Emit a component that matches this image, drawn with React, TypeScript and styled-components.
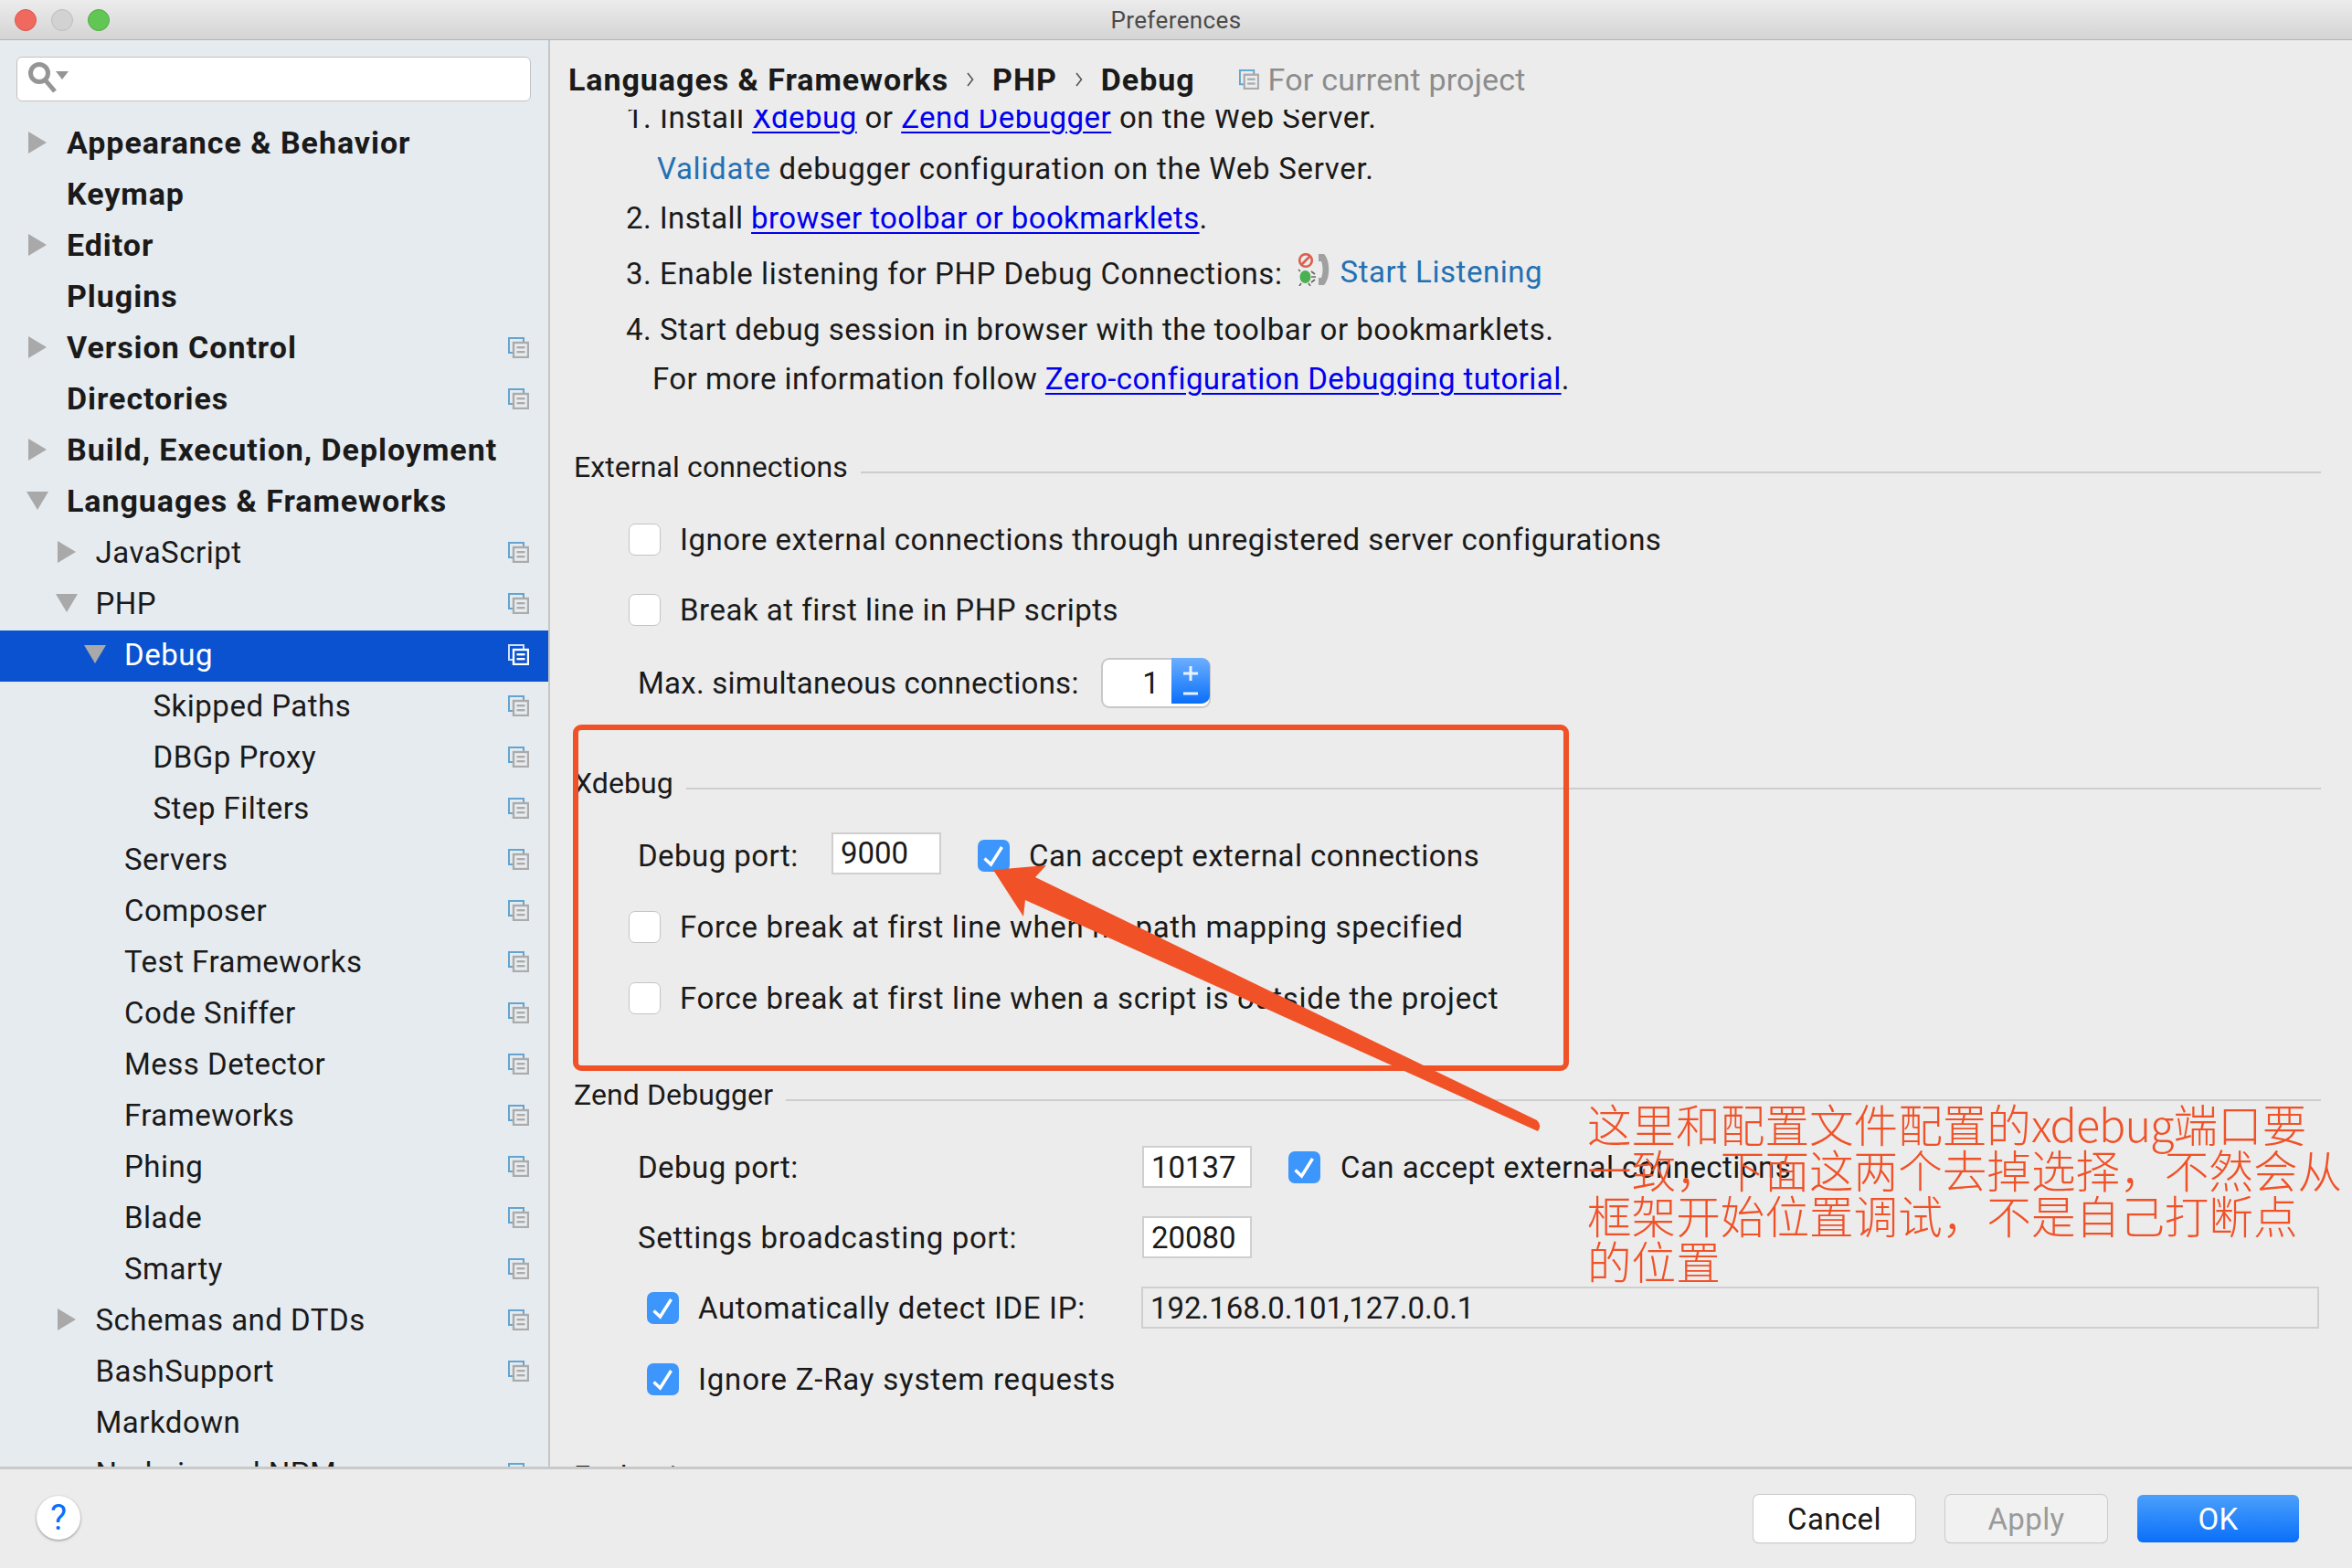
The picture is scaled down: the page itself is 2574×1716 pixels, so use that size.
import React from 'react';
import styled, { createGlobalStyle } from 'styled-components';

const GlobalStyle = createGlobalStyle`
  html, body {
    margin: 0;
    padding: 0;
    background: #ececec;
  }
  body {
    font-family: Roboto, "Liberation Sans", sans-serif;
    color: #1a1a1a;
  }
`;

type TreeItem = {
  label: string;
  level: number;
  arrow?: 'right' | 'down';
  bold?: boolean;
  copy?: boolean;
  selected?: boolean;
};

const tree: TreeItem[] = [
  { label: 'Appearance & Behavior', level: 0, arrow: 'right', bold: true },
  { label: 'Keymap', level: 0, bold: true },
  { label: 'Editor', level: 0, arrow: 'right', bold: true },
  { label: 'Plugins', level: 0, bold: true },
  { label: 'Version Control', level: 0, arrow: 'right', bold: true, copy: true },
  { label: 'Directories', level: 0, bold: true, copy: true },
  { label: 'Build, Execution, Deployment', level: 0, arrow: 'right', bold: true },
  { label: 'Languages & Frameworks', level: 0, arrow: 'down', bold: true },
  { label: 'JavaScript', level: 1, arrow: 'right', copy: true },
  { label: 'PHP', level: 1, arrow: 'down', copy: true },
  { label: 'Debug', level: 2, arrow: 'down', copy: true, selected: true },
  { label: 'Skipped Paths', level: 3, copy: true },
  { label: 'DBGp Proxy', level: 3, copy: true },
  { label: 'Step Filters', level: 3, copy: true },
  { label: 'Servers', level: 2, copy: true },
  { label: 'Composer', level: 2, copy: true },
  { label: 'Test Frameworks', level: 2, copy: true },
  { label: 'Code Sniffer', level: 2, copy: true },
  { label: 'Mess Detector', level: 2, copy: true },
  { label: 'Frameworks', level: 2, copy: true },
  { label: 'Phing', level: 2, copy: true },
  { label: 'Blade', level: 2, copy: true },
  { label: 'Smarty', level: 2, copy: true },
  { label: 'Schemas and DTDs', level: 1, arrow: 'right', copy: true },
  { label: 'BashSupport', level: 1, copy: true },
  { label: 'Markdown', level: 1 },
  { label: 'Node.js and NPM', level: 1, copy: true },
];

const Window = styled.div`
  position: relative;
  width: 2574px;
  height: 1716px;
  display: flex;
  flex-direction: column;
  overflow: hidden;
  background: #ececec;
`;

const TitleBar = styled.header`
  height: 43px;
  flex: none;
  position: relative;
  display: flex;
  align-items: center;
  justify-content: center;
  background: linear-gradient(#ececec, #d4d4d4);
  border-bottom: 1px solid #b4b4b4;
  font-size: 26px;
  letter-spacing: 0.4px;
  color: #4a4a4a;
`;

const Lights = styled.div`
  position: absolute;
  left: 16px;
  top: 10px;
  display: flex;
  gap: 16px;
`;

const Light = styled.span<{ $color: string; $edge: string }>`
  width: 24px;
  height: 24px;
  border-radius: 50%;
  background: ${p => p.$color};
  border: 1px solid ${p => p.$edge};
  box-sizing: border-box;
`;

const Body = styled.div`
  flex: 1;
  min-height: 0;
  display: flex;
`;

const Sidebar = styled.aside`
  width: 600px;
  flex: none;
  background: #e6ebf0;
  border-right: 2px solid #c6c6c6;
  overflow: hidden;
  display: flex;
  flex-direction: column;
`;

const SearchBox = styled.div`
  flex: none;
  margin: 18px 19px 19px 18px;
  height: 49px;
  box-sizing: border-box;
  background: #fff;
  border: 1px solid #c2c2c2;
  border-radius: 6px;
  display: flex;
  align-items: center;
  padding: 0 0 3px 12px;
`;

const TreeRow = styled.div<{ $level: number; $selected?: boolean; $bold?: boolean }>`
  height: 56px;
  flex: none;
  box-sizing: border-box;
  display: flex;
  align-items: center;
  padding: 0 21px 4px ${p => 31 + p.$level * 31.5}px;
  background: ${p => (p.$selected ? '#0b52d0' : 'transparent')};
  color: ${p => (p.$selected ? '#fff' : '#1a1a1a')};
  font-size: ${p => (p.$bold ? 34 : 33)}px;
  font-weight: ${p => (p.$bold ? 700 : 400)};
  letter-spacing: ${p => (p.$bold ? 0.95 : 0.5)}px;
`;

const ArrowSlot = styled.span`
  width: 42px;
  flex: none;
  display: flex;
  align-items: center;
`;

const DownArrow = styled.svg`
  margin-left: -2px;
`;

const TreeLabel = styled.span`
  flex: 1;
  white-space: nowrap;
`;

const Pane = styled.main`
  flex: 1;
  min-width: 0;
  display: flex;
  flex-direction: column;
`;

const PaneHeader = styled.div`
  flex: none;
  height: 76px;
  box-sizing: border-box;
  padding: 10px 0 0 20px;
  display: flex;
  align-items: center;
  font-size: 34px;
  font-weight: 700;
  letter-spacing: 0.95px;
  line-height: 46px;
  white-space: nowrap;
`;

const Chevron = styled.span`
  display: flex;
  width: 48px;
  justify-content: center;
  color: #555;
`;

const ProjectNote = styled.span`
  margin-left: 48px;
  display: flex;
  align-items: center;
  gap: 10px;
  color: #8c8c8c;
  font-weight: 400;
  letter-spacing: 0.2px;
`;

const Scroll = styled.div`
  flex: 1;
  min-height: 0;
  overflow: hidden;
`;

const Row = styled.div<{ $gap?: number; $left: number; $ls?: number }>`
  height: 44px;
  margin-top: ${p => p.$gap ?? 0}px;
  padding-left: ${p => p.$left}px;
  display: flex;
  align-items: center;
  font-size: 33px;
  letter-spacing: ${p => p.$ls ?? 0.5}px;
  white-space: pre;
`;

const Link = styled.a`
  color: #0000ee;
  text-decoration: underline;
  text-decoration-thickness: 2px;
  text-underline-offset: 4px;
`;

const Action = styled.span<{ $up?: number }>`
  color: #2470b3;
  margin-top: ${p => p.$up ?? 0}px;
`;

const GroupRow = styled(Row)`
  padding-right: 34px;
  font-size: 32px;
  letter-spacing: 0.1px;
`;

const FieldRow = styled(Row)`
  padding-right: 36px;
`;

const GroupRule = styled.span`
  flex: 1;
  height: 2px;
  background: #cdcdcd;
  margin-left: 14px;
  margin-top: 12px;
`;

const Box = styled.span<{ $on?: boolean; $mr: number; $ml?: number }>`
  width: 35px;
  height: 35px;
  flex: none;
  box-sizing: border-box;
  margin-left: ${p => p.$ml ?? 0}px;
  margin-right: ${p => p.$mr}px;
  border-radius: 7px;
  background: ${p => (p.$on ? '#3d96fb' : '#fff')};
  border: ${p => (p.$on ? 'none' : '1px solid #c4c4c4')};
  display: flex;
  align-items: center;
  justify-content: center;
`;

const Label = styled.span<{ $w: number }>`
  width: ${p => p.$w}px;
  flex: none;
`;

const Field = styled.span<{ $w?: number; $disabled?: boolean; $up?: number }>`
  width: ${p => (p.$w ? `${p.$w}px` : 'auto')};
  flex: ${p => (p.$w ? 'none' : '1')};
  height: 46px;
  box-sizing: border-box;
  margin-top: ${p => p.$up ?? 0}px;
  padding-left: 8px;
  background: ${p => (p.$disabled ? '#ececec' : '#fff')};
  border: 2px solid #cfcfcf;
  display: flex;
  align-items: center;
  letter-spacing: -0.05px;
`;

const Spinner = styled.span`
  width: 120px;
  height: 55px;
  flex: none;
  box-sizing: border-box;
  background: #fff;
  border: 2px solid #c8c8c8;
  border-radius: 9px;
  position: relative;
  display: flex;
  justify-content: flex-end;
  align-items: center;
  padding-right: 54px;
`;

const Stepper = styled.span`
  position: absolute;
  right: -1px;
  top: -2px;
  width: 42px;
  height: 50px;
  border-radius: 0 9px 9px 0;
  background: linear-gradient(#6cafff, #0a6ffa);
  display: flex;
  flex-direction: column;
  align-items: center;
  justify-content: space-around;
  padding: 3px 0;
  box-sizing: border-box;
`;

const Footer = styled.footer`
  flex: none;
  height: 111px;
  box-sizing: border-box;
  border-top: 3px solid #c9c9c9;
  padding: 29px 58px 0 40px;
  display: flex;
  align-items: flex-start;
  gap: 33px;
`;

const HelpButton = styled.span`
  width: 48px;
  height: 48px;
  margin-right: auto;
  border-radius: 50%;
  background: #fff;
  box-shadow: 0 1px 3px rgba(0, 0, 0, 0.4);
  color: #0a6ffa;
  font-size: 38px;
  display: flex;
  align-items: center;
  justify-content: center;
`;

const DialogButton = styled.span<{ $kind: 'plain' | 'muted' | 'primary' }>`
  width: 177px;
  height: 52px;
  box-sizing: border-box;
  margin-top: -1px;
  border-radius: 6px;
  display: flex;
  align-items: center;
  justify-content: center;
  font-size: 33px;
  letter-spacing: 0.4px;
  background: ${p =>
    p.$kind === 'primary'
      ? 'linear-gradient(#4ba0fb, #0a6ffa)'
      : p.$kind === 'plain'
        ? '#fff'
        : '#f1f1f1'};
  color: ${p => (p.$kind === 'primary' ? '#fff' : p.$kind === 'plain' ? '#1a1a1a' : '#9a9a9a')};
  box-shadow: ${p => (p.$kind === 'primary' ? 'none' : '0 0 0 1px #cbcbcb, 0 1px 1px #aaa')};
`;

const Highlight = styled.div`
  position: absolute;
  left: 627px;
  top: 793px;
  width: 1090px;
  height: 379px;
  box-sizing: border-box;
  border: 6px solid #f05127;
  border-radius: 9px;
  pointer-events: none;
`;

const ArrowLayer = styled.svg`
  position: absolute;
  left: 0;
  top: 0;
  pointer-events: none;
`;

const Note = styled.div`
  position: absolute;
  left: 1737px;
  top: 1204px;
  font-family: "Noto Sans CJK SC", "Liberation Sans", sans-serif;
  font-size: 48.6px;
  font-weight: 300;
  line-height: 50px;
  color: #f05127;
  white-space: nowrap;
`;

const NoteLatin = styled.span`
  letter-spacing: -1px;
`;

const ListenSvg = styled.svg`
  flex: none;
  margin: -8px 11px 0 16px;
`;

const TreeArrow = ({ dir, color }: { dir: 'right' | 'down'; color: string }) =>
  dir === 'right' ? (
    <svg width="20" height="24" viewBox="0 0 20 24">
      <path d="M0 0 L20 12 L0 24 Z" fill={color} />
    </svg>
  ) : (
    <DownArrow width="24" height="20" viewBox="0 0 24 20">
      <path d="M0 0 L24 0 L12 20 Z" fill={color} />
    </DownArrow>
  );

const CopyIcon = ({ inverse, size = 23 }: { inverse?: boolean; size?: number }) => (
  <svg width={size} height={size} viewBox="0 0 23 23">
    <rect x="1" y="1" width="16" height="16" fill="none" stroke={inverse ? '#cfe0f7' : '#62a5d0'} strokeWidth="2" />
    <rect x="6" y="6" width="16" height="16" fill={inverse ? '#0b52d0' : '#e9edf0'} stroke={inverse ? '#fff' : '#ababab'} strokeWidth="2.4" />
    <rect x="9.5" y="10" width="9" height="2.4" fill={inverse ? '#fff' : '#ababab'} />
    <rect x="9.5" y="15" width="9" height="2.4" fill={inverse ? '#fff' : '#ababab'} />
  </svg>
);

const SearchIcon = () => (
  <svg width="48" height="34" viewBox="0 0 48 34">
    <circle cx="12" cy="12" r="9.5" fill="none" stroke="#959595" strokeWidth="5" />
    <path d="M18 19 L29 32" stroke="#959595" strokeWidth="5" />
    <path d="M30 10 H44 L37 19 Z" fill="#959595" />
  </svg>
);

const ChevronIcon = () => (
  <svg width="8" height="16" viewBox="0 0 8 16">
    <path d="M1 1 L6.5 8 L1 15" fill="none" stroke="#555" strokeWidth="1.6" />
  </svg>
);

const Tick = () => (
  <svg width="35" height="35" viewBox="0 0 35 35">
    <path d="M7.5 20.5 L14.5 27 L26.5 8" fill="none" stroke="#fff" strokeWidth="3.4" />
  </svg>
);

const ListenIcon = () => (
  <ListenSvg width="36" height="36" viewBox="0 0 36 36">
    <circle cx="9" cy="8" r="6.8" fill="none" stroke="#d9604f" strokeWidth="2.6" />
    <path d="M4.5 12.5 L13.5 3.5" stroke="#d9604f" strokeWidth="2.6" />
    <ellipse cx="8.5" cy="26" rx="6" ry="7" fill="#4bb04f" />
    <path d="M15 20 L19 23 M15 26 L20 26 M15 32 L19 29 M3 20 L1 18 M4 33 L2 36 M12 33 L14 36" stroke="#666" strokeWidth="1.6" />
    <path d="M23 1 H29 C36 8 36 28 29 35 H23 V27 H26 C28 22 28 14 26 9 H23 Z" fill="#a0a0a0" />
  </ListenSvg>
);

const App: React.FC = () => (
  <Window>
    <GlobalStyle />
    <TitleBar>
      <Lights>
        <Light $color="#f0695f" $edge="#d9564c" />
        <Light $color="#d2d2d2" $edge="#bdbdbd" />
        <Light $color="#62c655" $edge="#4eab42" />
      </Lights>
      Preferences
    </TitleBar>

    <Body>
      <Sidebar>
        <SearchBox>
          <SearchIcon />
        </SearchBox>
        {tree.map(item => (
          <TreeRow key={item.label} $level={item.level} $selected={item.selected} $bold={item.bold}>
            <ArrowSlot>{item.arrow && <TreeArrow dir={item.arrow} color="#a9a9a9" />}</ArrowSlot>
            <TreeLabel>{item.label}</TreeLabel>
            {item.copy && <CopyIcon inverse={item.selected} />}
          </TreeRow>
        ))}
      </Sidebar>

      <Pane>
        <PaneHeader>
          Languages &amp; Frameworks
          <Chevron><ChevronIcon /></Chevron>
          PHP
          <Chevron><ChevronIcon /></Chevron>
          Debug
          <ProjectNote>
            <CopyIcon size={22} />
            For current project
          </ProjectNote>
        </PaneHeader>

        <Scroll>
          <Row $left={83} $gap={-14}>
            1. Install <Link>Xdebug</Link> or <Link>Zend Debugger</Link> on the Web Server.
          </Row>
          <Row $left={117} $gap={12} $ls={0.7}>
            <Action>Validate</Action> debugger configuration on the Web Server.
          </Row>
          <Row $left={83} $gap={10} $ls={0.4}>
            2. Install <Link>browser toolbar or bookmarklets</Link>.
          </Row>
          <Row $left={83} $gap={17} $ls={0.55}>
            3. Enable listening for PHP Debug Connections:<ListenIcon /><Action $up={-3}>Start Listening</Action>
          </Row>
          <Row $left={83} $gap={17}>
            4. Start debug session in browser with the toolbar or bookmarklets.
          </Row>
          <Row $left={112} $gap={10} $ls={0.45}>
            For more information follow <Link>Zero-configuration Debugging tutorial</Link>.
          </Row>

          <GroupRow $left={26} $gap={53}>
            External connections
            <GroupRule />
          </GroupRow>
          <Row $left={86} $gap={35}>
            <Box $mr={21} />
            Ignore external connections through unregistered server configurations
          </Row>
          <Row $left={86} $gap={33}>
            <Box $mr={21} />
            Break at first line in PHP scripts
          </Row>
          <Row $left={96} $gap={36} $ls={0.25}>
            <Label $w={507}>Max. simultaneous connections:</Label>
            <Spinner>
              1
              <Stepper>
                <svg width="18" height="18" viewBox="0 0 18 18">
                  <path d="M9 1 V17 M1 9 H17" stroke="#e8f2ff" strokeWidth="3" />
                </svg>
                <svg width="18" height="4" viewBox="0 0 18 4">
                  <path d="M1 2 H17" stroke="#e8f2ff" strokeWidth="3" />
                </svg>
              </Stepper>
            </Spinner>
          </Row>

          <GroupRow $left={26} $gap={66}>
            Xdebug
            <GroupRule />
          </GroupRow>
          <Row $left={96} $gap={35} $ls={0.45}>
            <Label $w={212}>Debug port:</Label>
            <Field $w={120} $up={-5}>9000</Field>
            <Box $on $mr={21} $ml={40}><Tick /></Box>
            Can accept external connections
          </Row>
          <Row $left={86} $gap={34} $ls={0.66}>
            <Box $mr={21} />
            Force break at first line when no path mapping specified
          </Row>
          <Row $left={86} $gap={34} $ls={0.67}>
            <Box $mr={21} />
            Force break at first line when a script is outside the project
          </Row>

          <GroupRow $left={26} $gap={62}>
            Zend Debugger
            <GroupRule />
          </GroupRow>
          <Row $left={96} $gap={35} $ls={0.45}>
            <Label $w={552}>Debug port:</Label>
            <Field $w={120}>10137</Field>
            <Box $on $mr={22} $ml={40}><Tick /></Box>
            Can accept external connections
          </Row>
          <Row $left={96} $gap={33} $ls={0.65}>
            <Label $w={552}>Settings broadcasting port:</Label>
            <Field $w={120}>20080</Field>
          </Row>
          <FieldRow $left={106} $gap={33} $ls={0.65}>
            <Box $on $mr={21}><Tick /></Box>
            <Label $w={485}>Automatically detect IDE IP:</Label>
            <Field $disabled>192.168.0.101,127.0.0.1</Field>
          </FieldRow>
          <Row $left={106} $gap={34} $ls={0.8}>
            <Box $on $mr={21}><Tick /></Box>
            Ignore Z-Ray system requests
          </Row>
          <GroupRow $left={26} $gap={62}>
            Evaluation
            <GroupRule />
          </GroupRow>
        </Scroll>
      </Pane>
    </Body>

    <Footer>
      <HelpButton>?</HelpButton>
      <DialogButton $kind="plain">Cancel</DialogButton>
      <DialogButton $kind="muted">Apply</DialogButton>
      <DialogButton $kind="primary">OK</DialogButton>
    </Footer>

    <Highlight />
    <ArrowLayer width="2574" height="1716" viewBox="0 0 2574 1716">
      <path
        d="M1087 952 L1145 947 L1133 960 L1682 1226 Q1688 1232 1683 1238 L1122 985 L1120 1003 Z"
        fill="#f05127"
      />
    </ArrowLayer>
    <Note>
      这里和配置文件配置的<NoteLatin>xdebug</NoteLatin>端口要<br />
      一致，下面这两个去掉选择，不然会从<br />
      框架开始位置调试，不是自己打断点<br />
      的位置
    </Note>
  </Window>
);

export default App;
